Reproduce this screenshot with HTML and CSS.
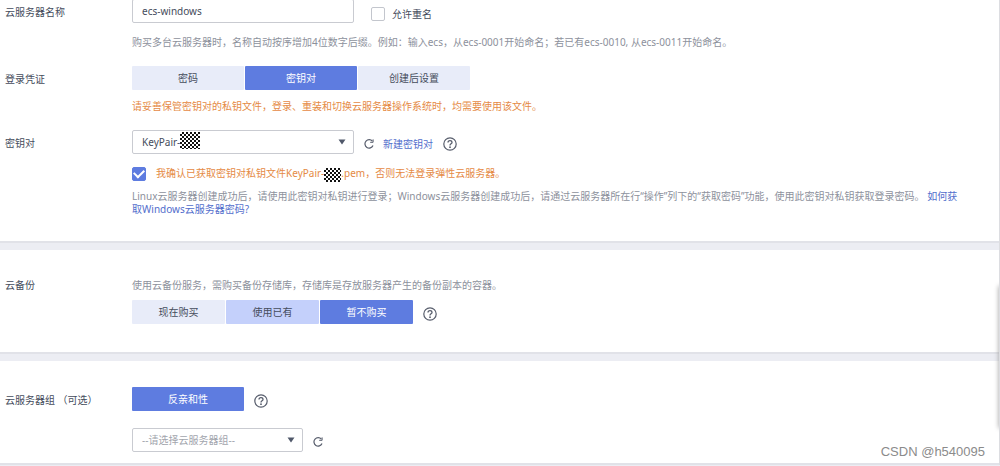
FILE: index.html
```html
<!DOCTYPE html>
<html lang="zh-CN">
<head>
<meta charset="utf-8">
<meta name="viewport" content="width=device-width, initial-scale=1">
<title>购买弹性云服务器</title>
<link rel="stylesheet" href="styles.css">
</head>
<body>
<svg class="symbols" aria-hidden="true">
  <symbol id="help" viewBox="0 0 14 14">
    <circle cx="7" cy="7" r="6.2" fill="none" stroke="currentColor" stroke-width="1.2"/>
    <path d="M5 5.6C5 4.3 5.9 3.6 7 3.6s2 .7 2 1.8c0 1.4-2 1.5-2 3" fill="none" stroke="currentColor" stroke-width="1.3"/>
    <circle cx="7" cy="10.2" r=".9" fill="currentColor"/>
  </symbol>
  <symbol id="refresh" viewBox="0 0 10 10">
    <path d="M8.4 2.2A4.2 4.2 0 1 0 9 6.6" fill="none" stroke="currentColor" stroke-width="1.2"/>
    <path d="M9.1.4v2.9H6.2" fill="none" stroke="currentColor" stroke-width="1"/>
  </symbol>
  <symbol id="caret" viewBox="0 0 8 6">
    <path d="M.5.5h7L4 5.5z" fill="currentColor"/>
  </symbol>
</svg>
<main class="page">
  <section class="panel panel-login">
    <div class="row row-name">
      <label class="label" for="name">云服务器名称</label>
      <div class="field">
        <div class="line">
          <input class="text-input" id="name" type="text" value="ecs-windows">
          <label class="check check-dup"><input class="box" type="checkbox"><span>允许重名</span></label>
        </div>
        <p class="hint">购买多台云服务器时，名称自动按序增加4位数字后缀。例如：输入ecs，从ecs-0001开始命名；若已有ecs-0010, 从ecs-0011开始命名。</p>
      </div>
    </div>
    <div class="row">
      <span class="label">登录凭证</span>
      <div class="field">
        <div class="segments segments-wide">
          <button class="segment" type="button">密码</button>
          <button class="segment active" type="button">密钥对</button>
          <button class="segment" type="button">创建后设置</button>
        </div>
        <p class="hint warn">请妥善保管密钥对的私钥文件，登录、重装和切换云服务器操作系统时，均需要使用该文件。</p>
      </div>
    </div>
    <div class="row">
      <label class="label" for="keypair">密钥对</label>
      <div class="field">
        <div class="line">
          <div class="select-wrap">
            <select class="select" id="keypair"><option>KeyPair-</option></select>
            <span class="mosaic mosaic-select"></span>
            <svg class="caret"><use href="#caret"/></svg>
          </div>
          <button class="icon-button" type="button" aria-label="刷新"><svg class="refresh"><use href="#refresh"/></svg></button>
          <a class="link" href="#">新建密钥对</a>
          <button class="icon-button" type="button" aria-label="帮助"><svg class="help"><use href="#help"/></svg></button>
        </div>
        <label class="check check-confirm"><input class="box" type="checkbox" checked><span class="warn">我确认已获取密钥对私钥文件KeyPair-<span class="mosaic"></span>.pem，否则无法登录弹性云服务器。</span></label>
        <p class="note">Linux云服务器创建成功后，请使用此密钥对私钥进行登录；Windows云服务器创建成功后，请通过云服务器所在行“操作”列下的“获取密码”功能，使用此密钥对私钥获取登录密码。 <a class="link" href="#">如何获取Windows云服务器密码?</a></p>
      </div>
    </div>
  </section>
  <section class="panel panel-backup">
    <div class="row">
      <span class="label label-text">云备份</span>
      <div class="field">
        <p class="intro">使用云备份服务，需购买备份存储库，存储库是存放服务器产生的备份副本的容器。</p>
        <div class="line">
          <div class="segments">
            <button class="segment" type="button">现在购买</button>
            <button class="segment hover" type="button">使用已有</button>
            <button class="segment active" type="button">暂不购买</button>
          </div>
          <button class="icon-button" type="button" aria-label="帮助"><svg class="help"><use href="#help"/></svg></button>
        </div>
      </div>
    </div>
  </section>
  <section class="panel panel-group">
    <div class="row">
      <label class="label" for="group">云服务器组 （可选）</label>
      <div class="field">
        <div class="line">
          <div class="segments segments-wide"><button class="segment active" type="button">反亲和性</button></div>
          <button class="icon-button" type="button" aria-label="帮助"><svg class="help"><use href="#help"/></svg></button>
        </div>
        <div class="line line-group">
          <div class="select-wrap select-group">
            <select class="select placeholder" id="group"><option>--请选择云服务器组--</option></select>
            <svg class="caret"><use href="#caret"/></svg>
          </div>
          <button class="icon-button" type="button" aria-label="刷新"><svg class="refresh"><use href="#refresh"/></svg></button>
        </div>
      </div>
    </div>
  </section>
  <span class="edge-shadow"></span>
  <span class="watermark">CSDN @h540095</span>
</main>
</body>
</html>
```
FILE: styles.css
```css
* { box-sizing: border-box; }

body {
  margin: 0;
  background: #ecedf3;
  color: #454c5c;
  font: 10px/14px "Noto Sans", "Noto Sans CJK SC", sans-serif;
}

p { margin: 0; }

button, input, select { font: inherit; color: inherit; }

.symbols { position: absolute; width: 0; height: 0; }

.page {
  position: relative;
  display: flex;
  flex-direction: column;
  gap: 7px;
  overflow: hidden;
  border-right: 1px solid #dcdde1;
}

.panel {
  display: flex;
  flex-direction: column;
  background: #fff;
  border-bottom: 2px solid #e1e2e8;
}

.panel-login { gap: 17px; padding-bottom: 25px; }
.panel-backup { padding: 28px 0; }
.panel-group { padding: 26px 0 11px; }

.row {
  display: grid;
  grid-template-columns: 127px minmax(0, 1fr);
  padding: 0 32px 0 5px;
}

.row-name { margin-top: -1px; }

.label { line-height: 26px; white-space: nowrap; }
.label-text { line-height: 14px; }

.line { display: flex; align-items: center; }

.text-input, .select {
  width: 100%;
  height: 24px;
  padding: 0 9px;
  border: 1px solid #c9cbd1;
  border-radius: 2px;
  background: #fff;
  appearance: none;
}

.text-input { width: 222px; }

.check { display: flex; align-items: center; gap: 10px; }
.check-dup { gap: 7px; margin: 5px 0 0 17px; }
.check-confirm { height: 14px; margin-top: 13px; }

.box {
  width: 14px;
  height: 14px;
  margin: 0;
  border: 1px solid #c3c6cd;
  border-radius: 2px;
  background: #fff;
  appearance: none;
}

.box:checked {
  display: grid;
  place-content: center;
  border-color: #5e7ce0;
  background: #5e7ce0;
}

.box:checked::before {
  content: "";
  width: 8px;
  height: 5px;
  margin-bottom: 3px;
  border: solid #fff;
  border-width: 0 0 2px 2px;
  transform: rotate(-45deg);
}

.hint { margin-top: 9px; color: #8d919c; }
.hint.warn, .warn { color: #e58a45; }
.row-name .hint { margin-top: 12px; }

.segments { display: flex; gap: 1px; }

.segment {
  width: 93px;
  height: 24px;
  padding: 0;
  border: 0;
  border-radius: 1px;
  background: #e8ecf9;
}

.segments-wide .segment { width: 112px; }
.segment.hover { background: #c4d0fb; }
.segment.active { background: #5e7ce0; color: #fff; }

.select-wrap { position: relative; width: 222px; }
.select-group { width: 171px; }
.placeholder { color: #a2a5ad; }

.caret {
  position: absolute;
  top: 9px;
  right: 8px;
  width: 8px;
  height: 6px;
  color: #50586a;
  pointer-events: none;
}

.icon-button {
  display: flex;
  margin-left: 10px;
  padding: 3px 0 0;
  border: 0;
  background: none;
  color: #575d6c;
}

.refresh { width: 10px; height: 10px; }
.help { width: 14px; height: 14px; }

.link { color: #526ecc; text-decoration: none; }
.line .link { margin-left: 9px; padding-top: 3px; }

.mosaic {
  display: inline-block;
  width: 17px;
  height: 14px;
  vertical-align: middle;
  background: repeating-conic-gradient(#111 0 25%, #fff 0 50%) 0 0 / 4px 4px;
}

.mosaic-select {
  position: absolute;
  top: 2px;
  left: 48px;
  width: 20px;
  height: 17px;
}

.note { margin-top: 9px; color: #8d919c; line-height: 13px; }
.intro { margin-bottom: 8px; color: #8d919c; }
.line-group { margin-top: 17px; }

.edge-shadow {
  position: absolute;
  top: 286px;
  right: -4px;
  width: 4px;
  height: 142px;
  box-shadow: 0 0 5px #999;
}

.watermark {
  position: absolute;
  right: 14px;
  bottom: 5px;
  color: #8b8b8b;
  font: 13px/16px "Liberation Sans", Arial, sans-serif;
}
```
